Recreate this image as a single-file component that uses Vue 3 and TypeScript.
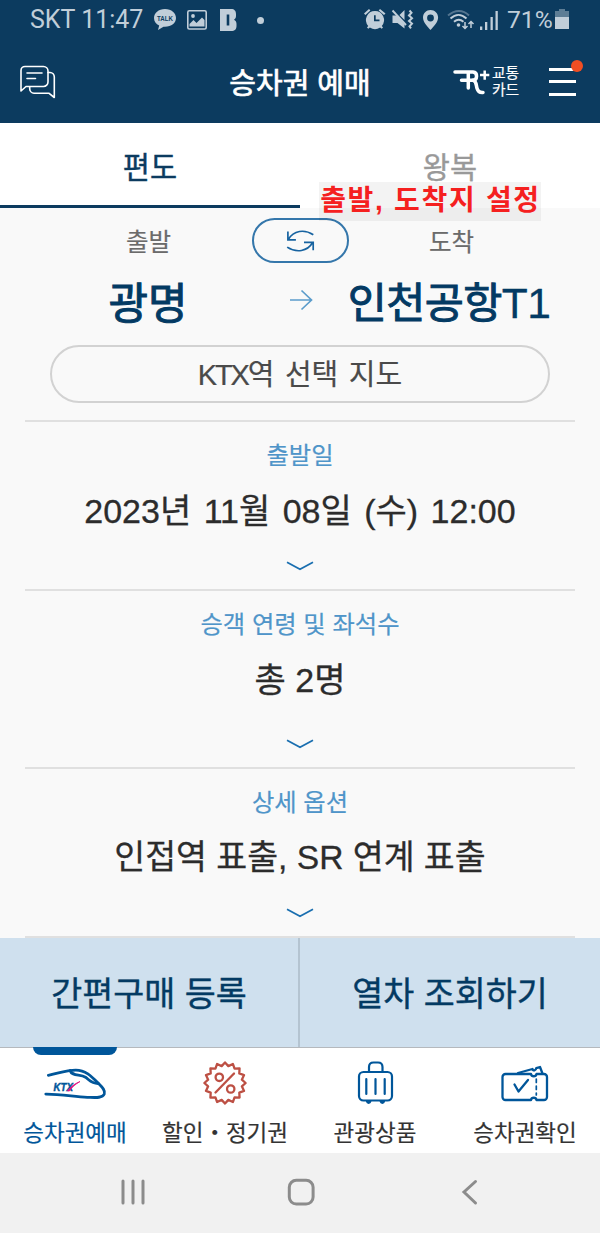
<script setup lang="ts">
interface Panel {
  id: string
  label: string
  value: string
}

interface NavItem {
  id: string
  label: string
  active?: boolean
}

const panels: Panel[] = [
  { id: 'date', label: '출발일', value: '2023년 11월 08일 (수) 12:00' },
  { id: 'seats', label: '승객 연령 및 좌석수', value: '총 2명' },
  { id: 'options', label: '상세 옵션', value: '인접역 표출, SR 연계 표출' },
]

const navItems: NavItem[] = [
  { id: 'booking', label: '승차권예매', active: true },
  { id: 'discount', label: '할인・정기권' },
  { id: 'tour', label: '관광상품' },
  { id: 'tickets', label: '승차권확인' },
]

// Scalloped outline of the discount badge
const badgePoints: string = Array.from({ length: 32 }, (_, i) => {
  const angle = (i * Math.PI) / 16 - Math.PI / 2
  const radius = i % 2 === 0 ? 20.6 : 17.2
  return `${(22 + radius * Math.cos(angle)).toFixed(2)},${(22 + radius * Math.sin(angle)).toFixed(2)}`
}).join(' ')
</script>

<template>
  <div class="screen">
    <header class="top">
      <div class="status">
        <span class="carrier">SKT 11:47</span>
        <svg class="st-talk" width="24" height="22" viewBox="0 0 24 22">
          <path fill="#c1ced9" d="M12 0C5.500 0 1 4 1 9c0 3.500 2 6 5.200 7.500L5 21l5.500-3.300h1.500c6.500 0 11-3.700 11-8.700S18.500 0 12 0z" />
          <text x="12" y="11.800" text-anchor="middle" textLength="16" lengthAdjust="spacingAndGlyphs">TALK</text>
        </svg>
        <svg class="st-pic" width="20" height="20" viewBox="0 0 20 20">
          <rect x="0.800" y="0.800" width="18.400" height="18.200" rx="1.500" fill="none" stroke="#c1ced9" stroke-width="1.600" />
          <circle cx="6" cy="6" r="1.900" fill="#c1ced9" />
          <path fill="#c1ced9" d="M2.500 16.500v-2.500l4-4 3 3 5.500-5.500 2.500 2.500v6.500z" />
        </svg>
        <svg class="st-b" width="17" height="22" viewBox="0 0 17 22">
          <path fill="#c1ced9" fill-rule="evenodd" d="M0 0h11C14.500 0 16 2 16 5v2c0 1.800-.8 3-2 3.800 1.500.8 2.500 2 2.500 4V17c0 3-1.500 5-5.500 5H0zM6.700 5.500v11h2.600v-11z" />
        </svg>
        <span class="st-dot"></span>
        <svg class="st-right" width="138" height="24" viewBox="0 0 138 24">
          <g fill="#c1ced9">
            <path fill-rule="evenodd" d="M11 3a9 9 0 0 1 6.800 14.900l1.200 1.600-1.300 1.300-1.600-1.300a9 9 0 0 1-10.200 0l-1.600 1.300L3 19.500l1.200-1.600A9 9 0 0 1 11 3zm-1 4.200v6h5.500v-1.700H11.700V7.200z" />
            <path d="M0 5.500 5 1l1.400 1.500L1.400 7zM16 1l5.500 4.500L20 7l-5.300-4.500z" />
            <path d="M28.500 7.500h4l8 8.500v4.500L33.500 15h-5zM35.500 7l5-5v10z" />
            <path fill-rule="evenodd" d="M66.500 2c4.300 0 7.600 3.200 7.600 7.500 0 5-4.600 9-7.600 12.500C63.500 18.500 59 14.500 59 9.500 59 5.200 62.300 2 66.500 2zm0 4.600a3.400 3.400 0 1 0 0 6.800 3.400 3.400 0 0 0 0-6.800z" />
            <circle cx="94.500" cy="17" r="1.800" />
            <path d="M116 18.500h2.300v3.500H116zM121 14h2.300v8H121zM126.500 9h2.300v13h-2.300zM131.500 3h2.300v19h-2.300z" />
          </g>
          <g fill="none" stroke="#c1ced9" stroke-width="1.900">
            <path d="M28.500 2.500 42 17" />
            <path d="m45.500 2.500 2 2.300-2.500 2.700 3 2.700-3 2.700 3 2.700-2.500 2.700 1.500 2" stroke-width="2" />
            <path d="M84 7.500c7-6 15-6 21 0" opacity=".4" />
            <path d="M86.500 10.500c5-4.800 11-4.800 16 0M90 13.800c3-2.700 6.500-2.700 9.500 0" />
            <path d="M101 14v6M98.500 18l2.500 2.500 2.500-2.500M107 20v-6M104.500 16l2.500-2.500 2.500 2.500" stroke-width="1.500" />
          </g>
        </svg>
        <span class="percent">71%</span>
        <svg class="st-bat" width="14" height="22" viewBox="0 0 14 22">
          <path fill="#5d7d95" d="M4 1h6v2h4v7H0V3h4z" />
          <path fill="#c1ced9" d="M0 9h14v12H0z" />
        </svg>
      </div>
      <div class="appbar">
        <svg class="chat" width="38" height="36" viewBox="19 64 38 36">
          <g fill="none" stroke="#fff" stroke-width="1.600" stroke-linejoin="round" stroke-linecap="round">
            <path d="M21 91V70.500a4 4 0 0 1 4-4h18.500a4.500 4.500 0 0 1 4.500 4.500v11a4.500 4.500 0 0 1-4.500 4.500H26z" />
            <path d="M48 72.500h2a4.500 4.500 0 0 1 4.300 4.500v20.500l-5.500-4.300H34a4.500 4.500 0 0 1-4.300-4.500v-2" />
            <path d="M27 73h15M27 78.500h8.500" />
          </g>
        </svg>
        <h1>승차권 예매</h1>
        <svg class="rlogo" width="37" height="28" viewBox="453 67 37 28">
          <g fill="none" stroke="#fff" stroke-width="3.500" stroke-linecap="round" stroke-linejoin="round">
            <path d="M455 71h18c5 .5 4.500 8 0 8.300h-11.500" />
            <path d="M468.300 72v15" />
            <path d="M473 79.300c3.500.7 3 4.500 4 8 1 3.500 3 4.500 6 4.200" />
            <path d="M484.700 69.500v9.200M480 74.100h9.300" stroke-width="2.500" stroke-linecap="butt" />
          </g>
        </svg>
        <div class="card"><span>교통</span><span>카드</span></div>
        <div class="menu"><i></i><i></i><i></i><b></b></div>
      </div>
    </header>

    <nav class="tabs">
      <div class="tab on">편도</div>
      <div class="tab">왕복<span class="note">출발, 도착지 설정</span></div>
    </nav>

    <main>
      <section class="route">
        <div class="caps">
          <span class="cap">출발</span>
          <button class="swap" type="button">
            <svg width="30" height="24" viewBox="285 229 30 24">
              <g fill="none" stroke="#1763a0" stroke-width="1.700">
                <path d="M287.900 231.500v8.300h8M288.500 239.300c5-9 16-10.300 24.800-4.500" />
                <path d="M304 242.300h9.200v8M312.500 242.800c-5 8.500-16 10.500-25.300 4.300" />
              </g>
            </svg>
          </button>
          <span class="cap">도착</span>
        </div>
        <div class="stations">
          <strong class="from">광명</strong>
          <svg class="arrow" width="24" height="22" viewBox="0 0 24 22">
            <path d="M1 11h21.500M12.500 1.500 22.500 11l-10 9.500" fill="none" stroke="#5b9ccb" stroke-width="1.700" />
          </svg>
          <strong class="to">인천공항<span>T1</span></strong>
        </div>
        <button class="map" type="button"><span>KTX</span>역 선택 지도</button>
      </section>

      <section v-for="p in panels" :key="p.id" class="panel" :class="p.id">
        <h2>{{ p.label }}</h2>
        <p>{{ p.value }}</p>
        <svg class="chev" width="28" height="10" viewBox="0 0 28 10">
          <path d="M1 1.200 14 8.200 27 1.200" fill="none" stroke="#1a6fb0" stroke-width="1.800" />
        </svg>
      </section>
    </main>

    <div class="actions">
      <button type="button">간편구매 등록</button>
      <button type="button">열차 조회하기</button>
    </div>

    <nav class="bottom">
      <div v-for="n in navItems" :key="n.id" class="item" :class="[n.id, { active: n.active }]">
        <svg v-if="n.id === 'booking'" width="64" height="44" viewBox="43 1061 64 44">
          <g fill="none" stroke="#00569a" stroke-width="2.800" stroke-linecap="round" stroke-linejoin="round">
            <path d="M48.300 1075.300c10-2 18-5 27.500-5.200 9.500 0 15.500 6 21.500 12.200 3.500 3.700 8.500 7.300 7 11.700-2 4.500-9.500 3.500-17 3.300-14-.8-27-3.300-41.500-3.200" />
            <path d="M70 1070.500c2 6 10 3.500 15.500 6.700 4.500 3.300 6 6.300 12.500 6.300" />
          </g>
          <text class="ktx" x="53.500" y="1090.700" textLength="19.500" lengthAdjust="spacingAndGlyphs">KTX</text>
          <path d="M67.500 1091c3.500-4.500 6.500-7 12.500-9.500-5 3-8.500 6-10.500 9.500z" fill="#e0107c" stroke="#e0107c" stroke-width=".8" />
        </svg>
        <svg v-else-if="n.id === 'discount'" width="44" height="44" viewBox="0 0 44 44">
          <g fill="none" stroke="#bd5044" stroke-width="2.300" stroke-linejoin="round" stroke-linecap="round">
            <polygon :points="badgePoints" />
            <circle cx="16.300" cy="16.300" r="3.700" />
            <circle cx="27.700" cy="28" r="3.700" />
            <path d="M31 12.500 12.500 31.500" />
          </g>
        </svg>
        <svg v-else-if="n.id === 'tour'" width="44" height="44" viewBox="353 1061 44 44">
          <g fill="none" stroke="#00569a" stroke-width="2.200" stroke-linecap="round">
            <rect x="359" y="1072" width="33" height="28.500" rx="4.500" />
            <path d="M369 1071.500v-4.500c0-3 1.500-4.500 4.500-4.500h4.500c3 0 4.500 1.500 4.500 4.500v4.500M366.300 1079v15M375.500 1079v15M384.700 1079v15" />
            <path d="M367.300 1101.500a1.400 1.400 0 0 0 2.700 0M381 1101.500a1.400 1.400 0 0 0 2.700 0" stroke-width="2.800" />
          </g>
        </svg>
        <svg v-else width="50" height="44" viewBox="500 1061 50 44">
          <g fill="none" stroke="#00569a" stroke-width="2.300" stroke-linecap="round" stroke-linejoin="round">
            <path d="M531 1074h-25.500a3 3 0 0 0-3 3v20a3 3 0 0 0 3 3H531c.5-3 5-3 5.500 0h7.500a3 3 0 0 0 3-3v-20a3 3 0 0 0-3-3h-7.500c-.5 3-5 3-5.500 0z" />
            <path d="m514.500 1084.500 4 7 9.500-11.500" />
            <path d="m518 1073 14.500-4c.5 2.300 3.500 1.500 3.800-.8l3.700-1.200 2.300 6" />
            <path d="M536.300 1079v16" stroke-width="1.700" stroke-dasharray="3.500 3.500" />
          </g>
        </svg>
        <span>{{ n.label }}</span>
      </div>
    </nav>

    <footer class="system">
      <svg width="28" height="28" viewBox="0 0 28 28"><path d="M4 3v22M14 3v22M24 3v22" stroke="#8c8c8c" stroke-width="3" stroke-linecap="round" /></svg>
      <svg width="28" height="28" viewBox="0 0 28 28"><rect x="2.300" y="2.300" width="23.800" height="23.800" rx="7" fill="none" stroke="#8c8c8c" stroke-width="3" /></svg>
      <svg width="28" height="28" viewBox="0 0 28 28"><path d="M20.500 3.500 9 14l11.500 11" fill="none" stroke="#8c8c8c" stroke-width="3" stroke-linecap="round" /></svg>
    </footer>
  </div>
</template>

<style>
body {
  margin: 0;
}
</style>

<style scoped>
.screen {
  width: 600px;
  height: 1233px;
  display: flex;
  flex-direction: column;
  overflow: hidden;
  background: #f9f9f9;
  font-family: "Liberation Sans", "Noto Sans CJK KR", sans-serif;
  white-space: nowrap;
}
svg {
  display: block;
  flex: none;
}
button {
  font: inherit;
  padding: 0;
  border: 0;
  background: none;
}
.top {
  height: 123px;
  flex: none;
  background: #0c3b5f;
  color: #fff;
}
.status {
  height: 40px;
  display: flex;
  align-items: center;
  color: #c1ced9;
  font: 25px/42px Roboto, sans-serif;
}
.carrier {
  width: 123px;
  margin-left: 30px;
}
.st-talk text {
  font: bold 7.500px "Liberation Sans", sans-serif;
  fill: #0c3b5f;
}
.st-pic {
  margin-left: 10px;
}
.st-b {
  margin-left: 13px;
}
.st-dot {
  width: 7px;
  height: 7px;
  margin-left: 20px;
  border-radius: 50%;
  background: #c1ced9;
}
.st-right {
  margin-left: 100px;
  margin-top: -1px;
}
.percent {
  width: 47px;
  margin-left: 5px;
  font-size: 24.600px;
}
.st-bat {
  margin-left: 1px;
  margin-top: -2px;
}
.appbar {
  height: 83px;
  display: flex;
  align-items: center;
}
.chat {
  margin-left: 19px;
}
h1 {
  width: 160px;
  margin: 5px 0 0 163px;
  font-size: 29px;
  font-weight: 400;
  line-height: 40px;
  text-align: center;
  -webkit-text-stroke: 0.700px #fff;
}
.rlogo {
  margin-left: 73px;
}
.card {
  display: flex;
  flex-direction: column;
  width: 30px;
  margin-left: 2px;
  font-size: 14.800px;
  line-height: 17px;
  -webkit-text-stroke: 0.200px #fff;
}
.menu {
  position: relative;
  display: flex;
  flex-direction: column;
  justify-content: space-between;
  width: 27px;
  height: 28px;
  margin-left: 27px;
}
.menu i {
  height: 3px;
  background: #fff;
}
.menu b {
  position: absolute;
  right: -7px;
  top: -8px;
  width: 12px;
  height: 12px;
  border-radius: 50%;
  background: #f04e23;
}
.tabs {
  height: 85px;
  flex: none;
  display: flex;
  background: #fff;
}
.tab {
  position: relative;
  flex: 1;
  box-sizing: border-box;
  height: 85px;
  padding-top: 25px;
  color: #999;
  font-size: 29.500px;
  line-height: 40px;
  text-align: center;
  -webkit-text-stroke: 0.400px #999;
}
.tab.on {
  color: #0c3b5f;
  border-bottom: 3px solid #0c3b5f;
  -webkit-text-stroke: 0.400px #0c3b5f;
}
.note {
  position: absolute;
  left: 19px;
  top: 59px;
  width: 222px;
  height: 39px;
  background: rgba(0, 0, 0, 0.047);
  color: #f5201f;
  font-size: 28px;
  font-weight: 700;
  line-height: 37px;
  letter-spacing: 1.700px;
  text-indent: 1px;
  -webkit-text-stroke: 0;
}
.route {
  height: 212px;
  box-sizing: border-box;
  padding-top: 10px;
}
.caps {
  height: 45px;
  display: flex;
  align-items: center;
  justify-content: center;
}
.cap {
  width: 206px;
  padding-top: 5px;
  color: #6b6b6b;
  font-size: 24.500px;
  line-height: 40px;
  text-align: center;
  -webkit-text-stroke: 0.200px #6b6b6b;
}
.swap {
  width: 97px;
  height: 45px;
  box-sizing: border-box;
  display: flex;
  align-items: center;
  justify-content: center;
  border: 2px solid #3577ab;
  border-radius: 23px;
}
.stations {
  display: flex;
  align-items: center;
  height: 60px;
  margin-top: 9px;
  color: #033a63;
  line-height: 60px;
}
.stations strong {
  padding-top: 3px;
  font-weight: 400;
  text-align: center;
  -webkit-text-stroke: 1px #033a63;
}
.stations strong span {
  -webkit-text-stroke: 0.300px #033a63;
}
.stations .from {
  box-sizing: border-box;
  width: 289px;
  padding-left: 7px;
  font-size: 43px;
}
.arrow {
  margin-bottom: 4px;
}
.to {
  width: 272px;
  font-size: 42.500px;
  letter-spacing: -0.600px;
}
.map {
  display: block;
  width: 500px;
  height: 58px;
  margin: 13px auto 0;
  box-sizing: border-box;
  border: 2px solid #d2d2d2;
  border-radius: 29px;
  color: #4a4a4a;
  font-size: 29px;
  line-height: 57px;
  word-spacing: 2.500px;
  -webkit-text-stroke: 0.200px #4a4a4a;
}
.map span {
  letter-spacing: -2.200px;
}
.panel {
  display: flex;
  flex-direction: column;
  align-items: center;
  box-sizing: border-box;
  height: 169px;
  margin: 0 25px;
  padding: 19px 0 18px;
  border-top: 2px solid #e0e0e0;
}
.panel.seats {
  height: 178px;
}
.panel.options {
  height: 171px;
  padding-bottom: 18px;
  border-bottom: 2px solid #e0e0e0;
}
.panel h2 {
  margin: 0;
  color: #4f95c9;
  font-size: 24.300px;
  font-weight: 400;
  line-height: 30px;
  -webkit-text-stroke: 0.200px #4f95c9;
}
.panel p {
  margin: 18px 0 auto;
  color: #2c2c2c;
  font-size: 34px;
  line-height: 44px;
  -webkit-text-stroke: 0.300px #2c2c2c;
}
.panel.date p {
  word-spacing: 3px;
}
.panel.options p {
  font-size: 33.600px;
}
.actions {
  display: flex;
  flex: none;
  height: 110px;
  box-sizing: border-box;
  border-bottom: 1px solid #b5b9bd;
  background: #cfe0ee;
}
.actions button {
  flex: 1;
  color: #033a63;
  font-size: 33.700px;
  line-height: 112px;
  -webkit-text-stroke: 0.400px #033a63;
}
.actions button:first-child {
  flex: 0 0 300px;
  box-sizing: border-box;
  border-right: 2px solid #b4c4d1;
}
.bottom {
  height: 105px;
  flex: none;
  display: flex;
  background: #fff;
}
.item {
  position: relative;
  flex: 1;
  display: flex;
  flex-direction: column;
  align-items: center;
  padding-top: 13px;
  color: #333;
  font-size: 22.500px;
}
.item span {
  margin-top: 14px;
  line-height: 30px;
  -webkit-text-stroke: 0.200px;
}
.item.active {
  color: #00569a;
}
.item.active::before {
  content: "";
  position: absolute;
  left: 33px;
  top: -1px;
  width: 84px;
  height: 8px;
  border-radius: 0 0 8px 8px;
  background: #00569a;
}
.ktx {
  font: italic bold 10px "Liberation Sans", sans-serif;
  fill: #00569a;
  stroke: #00569a;
  stroke-width: 0.400px;
}
.system {
  flex: 1;
  display: flex;
  align-items: center;
  justify-content: center;
  gap: 140px;
  padding: 0 0 2px 1px;
  background: #f1f1f1;
}
</style>
